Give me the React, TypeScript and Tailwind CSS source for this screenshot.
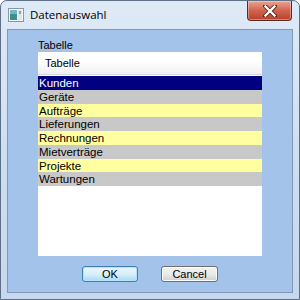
const rows = [
  { name: "Kunden", bg: "bg-[#000080] text-white" },
  { name: "Geräte", bg: "bg-[#c8c8c8] text-black" },
  { name: "Aufträge", bg: "bg-[#ffff9f] text-black" },
  { name: "Lieferungen", bg: "bg-[#c8c8c8] text-black" },
  { name: "Rechnungen", bg: "bg-[#ffff9f] text-black" },
  { name: "Mietverträge", bg: "bg-[#c8c8c8] text-black" },
  { name: "Projekte", bg: "bg-[#ffff9f] text-black" },
  { name: "Wartungen", bg: "bg-[#c8c8c8] text-black" },
];

function AppIcon() {
  return (
    <svg width="16" height="14" viewBox="0 0 16 14">
      <rect x="0.5" y="0.5" width="15" height="13" fill="#f4f6f8" stroke="#8c96a0" />
      <rect x="2" y="2" width="7" height="10" fill="#3d8f8a" />
      <rect x="2" y="2" width="7" height="4" fill="#6fb7c4" />
      <rect x="10" y="2" width="4" height="10" fill="#dfe6ec" />
      <rect x="11" y="3" width="2" height="3" fill="#7ea6c8" />
    </svg>
  );
}

function CloseButton() {
  return (
    <div className="absolute right-[7px] top-0 flex h-[20px] w-[45px] items-center justify-center rounded-b-[4px] border border-t-0 border-[#5b2c24] bg-gradient-to-b from-[#e9a493] via-[#d1644c] to-[#b8402a] shadow-[inset_0_0_0_1px_rgba(255,255,255,0.35)]">
      <svg width="14" height="12" viewBox="0 0 14 12">
        <path d="M2 1 L12 11 M12 1 L2 11" stroke="#5a2218" strokeWidth="4" strokeLinecap="square" />
        <path d="M2.5 1.5 L11.5 10.5 M11.5 1.5 L2.5 10.5" stroke="#ffffff" strokeWidth="2.4" strokeLinecap="square" />
      </svg>
    </div>
  );
}

export default function App() {
  return (
    <div className="relative flex h-[300px] w-[300px] flex-col rounded-t-[7px] border border-[#5f6f84] bg-gradient-to-b from-[#dfeaf7] via-[#cfdff2] to-[#c4d8ef] font-['Liberation_Sans',Arial,sans-serif]">
      <div className="flex h-[28px] shrink-0 items-center gap-[6px] pl-[7px]">
        <AppIcon />
        <span className="text-[11.5px] text-black font-['Open_Sans','Liberation_Sans',sans-serif] leading-none">
          Datenauswahl
        </span>
      </div>
      <CloseButton />

      <div className="mx-[6px] mb-[6px] flex flex-1 flex-col items-center border border-[#8197b5] bg-[#a4c3eb]">
        <div className="mt-[9px] w-[224px]">
          <div className="h-[13px] text-[11px] leading-[13px] text-black">Tabelle</div>
          <div className="flex h-[204px] flex-col bg-white">
            <div className="flex h-[23px] items-center border-b border-[#d5d7df] bg-gradient-to-b from-white from-40% to-[#eef0f4] pl-[7px] text-[11px] text-black">
              Tabelle
            </div>
            <div className="mt-[1px] flex flex-col">
              {rows.map((r) => (
                <div key={r.name} className={`h-[13.75px] pl-[1px] text-[11.5px] leading-[14px] ${r.bg}`}>
                  {r.name}
                </div>
              ))}
            </div>
          </div>
        </div>

        <div className="mt-[10px] flex gap-[23px]">
          <button className="flex h-[16px] w-[56px] items-center justify-center rounded-[3px] border border-[#3c7fb1] bg-gradient-to-b from-[#eaf6fd] via-[#d9f0fc] to-[#a7d9f5] text-[11px] leading-none text-black shadow-[inset_0_0_0_1px_#b6e3fb]">
            OK
          </button>
          <button className="flex h-[16px] w-[57px] items-center justify-center rounded-[3px] border border-[#707070] bg-gradient-to-b from-[#f2f2f2] via-[#ebebeb] to-[#cfcfcf] text-[11px] leading-none text-black shadow-[inset_0_0_0_1px_#fcfcfc]">
            Cancel
          </button>
        </div>
      </div>
    </div>
  );
}
